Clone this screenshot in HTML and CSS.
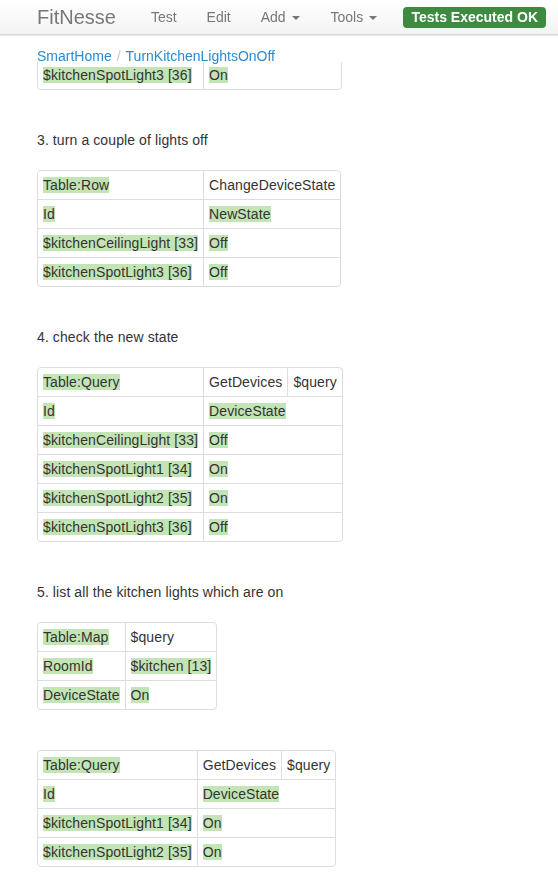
FILE: index.html
```html
<!DOCTYPE html>
<html>
<head>
<meta charset="utf-8">
<title>SmartHome.TurnKitchenLightsOnOff</title>
<link rel="stylesheet" href="styles.css">
</head>
<body>
<header class="navbar">
  <span class="brand">FitNesse</span>
  <nav class="nav">
    <a class="nav-link">Test</a>
    <a class="nav-link">Edit</a>
    <a class="nav-link">Add <span class="caret"></span></a>
    <a class="nav-link">Tools <span class="caret"></span></a>
  </nav>
  <span class="badge-ok">Tests Executed OK</span>
</header>
<div class="breadcrumb">
  <a class="crumb">SmartHome</a><span class="sep">/</span><a class="crumb">TurnKitchenLightsOnOff</a>
</div>

<main class="content">
  <table class="fit first">
    <tr><td class="c1"><span class="pass">$kitchenSpotLight3 [36]</span></td><td class="c2"><span class="pass">On</span></td></tr>
  </table>

  <p class="step">3. turn a couple of lights off</p>
  <table class="fit">
    <tr><td><span class="pass">Table:Row</span></td><td>ChangeDeviceState</td></tr>
    <tr><td><span class="pass">Id</span></td><td><span class="pass">NewState</span></td></tr>
    <tr><td><span class="pass">$kitchenCeilingLight [33]</span></td><td><span class="pass">Off</span></td></tr>
    <tr><td><span class="pass">$kitchenSpotLight3 [36]</span></td><td><span class="pass">Off</span></td></tr>
  </table>

  <p class="step">4. check the new state</p>
  <table class="fit">
    <tr><td><span class="pass">Table:Query</span></td><td>GetDevices</td><td>$query</td></tr>
    <tr><td><span class="pass">Id</span></td><td colspan="2"><span class="pass">DeviceState</span></td></tr>
    <tr><td><span class="pass">$kitchenCeilingLight [33]</span></td><td colspan="2"><span class="pass">Off</span></td></tr>
    <tr><td><span class="pass">$kitchenSpotLight1 [34]</span></td><td colspan="2"><span class="pass">On</span></td></tr>
    <tr><td><span class="pass">$kitchenSpotLight2 [35]</span></td><td colspan="2"><span class="pass">On</span></td></tr>
    <tr><td><span class="pass">$kitchenSpotLight3 [36]</span></td><td colspan="2"><span class="pass">Off</span></td></tr>
  </table>

  <p class="step">5. list all the kitchen lights which are on</p>
  <table class="fit">
    <tr><td><span class="pass">Table:Map</span></td><td>$query</td></tr>
    <tr><td><span class="pass">RoomId</span></td><td><span class="pass">$kitchen [13]</span></td></tr>
    <tr><td><span class="pass">DeviceState</span></td><td><span class="pass">On</span></td></tr>
  </table>

  <table class="fit spaced">
    <tr><td><span class="pass">Table:Query</span></td><td>GetDevices</td><td>$query</td></tr>
    <tr><td><span class="pass">Id</span></td><td colspan="2"><span class="pass">DeviceState</span></td></tr>
    <tr><td><span class="pass">$kitchenSpotLight1 [34]</span></td><td colspan="2"><span class="pass">On</span></td></tr>
    <tr><td><span class="pass">$kitchenSpotLight2 [35]</span></td><td colspan="2"><span class="pass">On</span></td></tr>
  </table>
</main>
</body>
</html>
```

FILE: styles.css
```css
html, body {
  margin: 0;
  padding: 0;
  background: #fff;
}

body {
  font-family: "Liberation Sans", Arial, sans-serif;
  font-size: 14px;
  line-height: 20px;
  color: #333;
}

.navbar {
  position: fixed;
  top: 0;
  left: 0;
  right: 0;
  height: 34px;
  display: flex;
  align-items: center;
  padding-left: 37px;
  background: linear-gradient(to bottom, #ffffff 0%, #f3f3f3 100%);
  border-bottom: 1px solid #d8d8d8;
  box-shadow: 0 1px 1px rgba(0, 0, 0, 0.08);
  z-index: 10;
}

.brand {
  font-size: 20px;
  color: #777;
  line-height: 20px;
}

.nav {
  display: flex;
  margin-left: 20px;
}

.nav-link {
  padding: 0 15px;
  color: #777;
  font-size: 14px;
  line-height: 20px;
}

.nav-link:last-child {
  padding-left: 16px;
}

.caret {
  display: inline-block;
  width: 0;
  height: 0;
  margin-left: 2px;
  vertical-align: middle;
  border-top: 4px solid #777;
  border-left: 4px solid transparent;
  border-right: 4px solid transparent;
}

.badge-ok {
  margin-left: auto;
  margin-right: 12px;
  background: #3e8a41;
  color: #fff;
  font-weight: bold;
  font-size: 14px;
  line-height: 21px;
  padding: 0 8px;
  border-radius: 4px;
}

.breadcrumb {
  position: fixed;
  top: 35px;
  left: 0;
  right: 0;
  height: 27px;
  padding: 11px 0 0 37px;
  box-sizing: border-box;
  background: #fff;
  z-index: 9;
  line-height: 20px;
}

.crumb {
  color: #2a8bd2;
}

.sep {
  color: #ccc;
  padding: 0 5px;
}

.content {
  padding: 60px 37px 20px;
  letter-spacing: 0.1px;
}

.fit {
  border-collapse: separate;
  border-spacing: 0;
  border: 1px solid #ddd;
  border-radius: 4px;
  margin: 0;
}

.fit td {
  padding: 4px 5px;
  line-height: 20px;
  border-top: 1px solid #ddd;
  border-right: 1px solid #ddd;
  white-space: nowrap;
  vertical-align: top;
}

.fit tr:first-child td {
  border-top: none;
}

.fit td:last-child {
  border-right: none;
}

.first {
  border-radius: 0 0 4px 4px;
}

.first td.c1 {
  width: 155px;
}

.first td.c2 {
  width: 127px;
}

.spaced {
  margin-top: 40px;
}

.step {
  margin: 40px 0 20px;
  line-height: 20px;
}

.pass {
  background: #c3e5b6;
}
```
